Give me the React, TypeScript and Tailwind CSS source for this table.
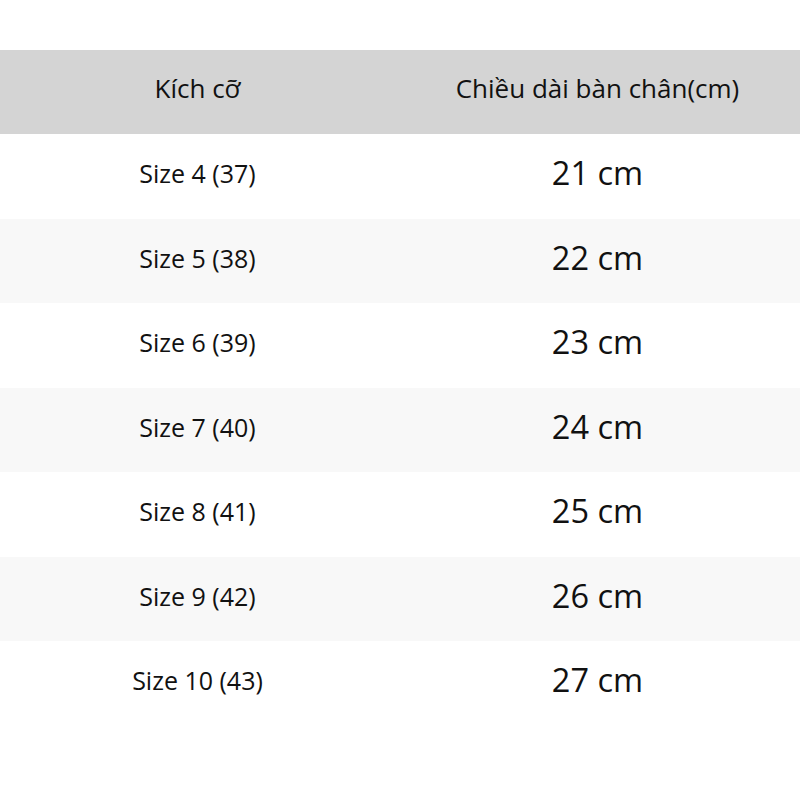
const rows = [
  { size: "Size 4 (37)", length: "21 cm" },
  { size: "Size 5 (38)", length: "22 cm" },
  { size: "Size 6 (39)", length: "23 cm" },
  { size: "Size 7 (40)", length: "24 cm" },
  { size: "Size 8 (41)", length: "25 cm" },
  { size: "Size 9 (42)", length: "26 cm" },
  { size: "Size 10 (43)", length: "27 cm" },
];

export default function App() {
  return (
    <div className="h-[800px] w-[800px] bg-white pt-[50px] font-['Open_Sans',sans-serif] text-[#111111]">
      <div className="grid h-[84px] grid-cols-[395px_1fr] items-center bg-[#d4d4d4] pb-[7px] text-[26px]">
        <div className="text-center">Kích cỡ</div>
        <div className="text-center">Chiều dài bàn chân(cm)</div>
      </div>
      {rows.map((row, i) => (
        <div
          key={row.size}
          className={`grid h-[84.5px] grid-cols-[395px_1fr] items-center pb-[5px] ${i % 2 === 1 ? "bg-[#f8f8f8]" : "bg-white"}`}
        >
          <div className="text-center text-[25px]">{row.size}</div>
          <div className="text-center text-[32.5px]">{row.length}</div>
        </div>
      ))}
    </div>
  );
}
